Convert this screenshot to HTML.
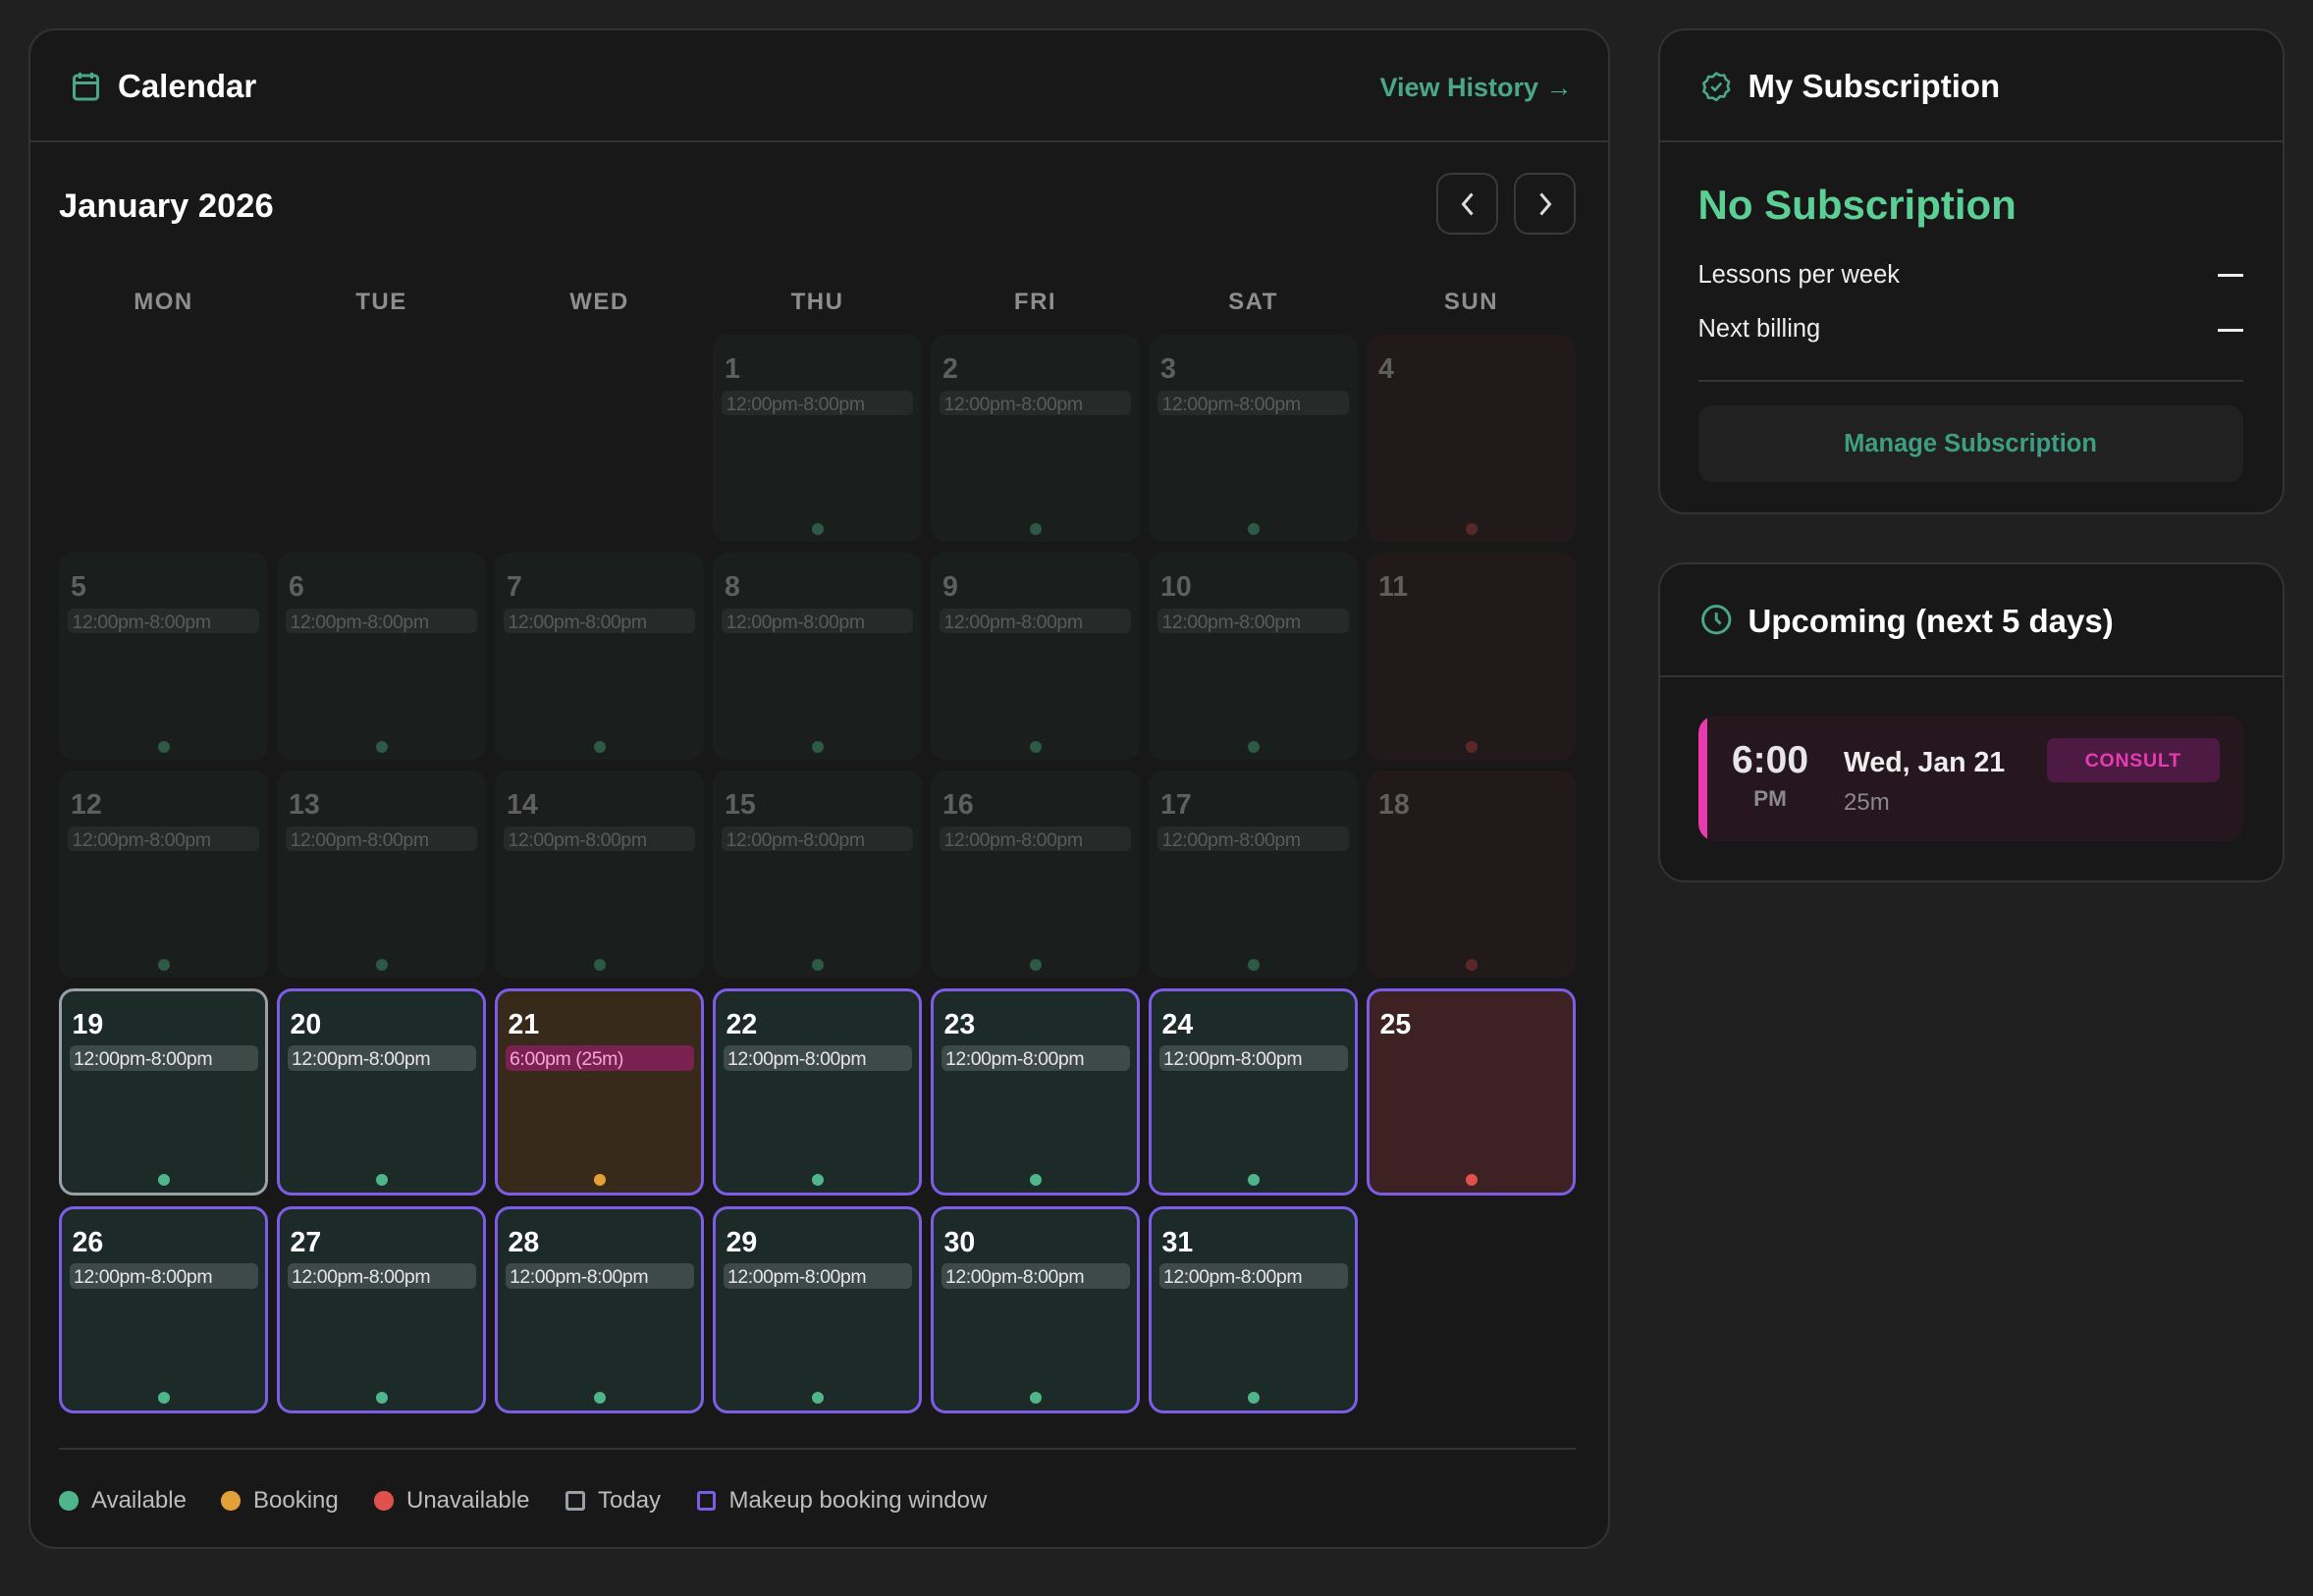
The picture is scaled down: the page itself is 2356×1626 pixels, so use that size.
<!DOCTYPE html>
<html><head><meta charset="utf-8"><style>
*{box-sizing:border-box;margin:0;padding:0}
html,body{width:2356px;height:1626px;overflow:hidden;background:#202020}
#w{zoom:1.5;width:1571px;height:1084px;position:relative;font-family:"Liberation Sans",sans-serif;color:#fff}
.card{position:absolute;background:#181818;border:1.5px solid #333;border-radius:18px}
.hdiv{position:absolute;left:0;right:0;height:1.5px;background:#333}
.t{position:absolute;white-space:nowrap}
.c{position:absolute;width:142px;height:141px;border-radius:10px;background:#1a1f1d}
.c .n{position:absolute;left:8px;top:13px;font-size:19px;font-weight:bold;color:#5f5f5f}
.c .ch{position:absolute;left:6px;right:6px;top:38px;height:17px;border-radius:4px;background:#262b2a;color:#5a5a5a;font-size:13px;line-height:19px;padding-left:3px;letter-spacing:-0.3px}
.c .d{position:absolute;left:67px;top:128px;width:8px;height:8px;border-radius:50%;background:#2d5a46}
.c.su{background:#221a1a}.c.su .d{background:#5a2828}
.c.cur{background:#1c2b27;border:2.5px solid #7d5ce6}
.c.cur .n{color:#fff;left:7px;top:12px}
.c.cur .ch{background:#3e4a48;color:#e6e6e6;left:5px;right:5px;top:37px}
.c.cur .d{background:#4fb58a;left:65px;top:124px}
.c.today{border-color:#9aa0a6}
.c.bk{background:#372a1a}.c.bk .ch{background:#7a2152;color:#f4a6d6}.c.bk .d{background:#e3a037}
.c.un{background:#3e2122}.c.un .d{background:#e0504c}
.wd{position:absolute;top:196px;width:142px;text-align:center;font-size:16px;font-weight:bold;color:#8e8e8e;letter-spacing:1px}
.lg{position:absolute;top:1010px;font-size:16px;color:#bdbdbd;display:flex;align-items:center}
</style></head><body><div id="w">

<div class="card" style="left:19px;top:19px;width:1074px;height:1033px">
 <div class="hdiv" style="top:75px"></div>
</div>
<svg class="t" style="left:47px;top:47px" width="22" height="22" viewBox="0 0 22 22" fill="none" stroke="#4aa889" stroke-width="2"><rect x="3" y="4" width="16" height="16" rx="2"/><path d="M7 2v4M15 2v4M3 9h16M7 9h5"/></svg>
<div class="t" style="left:80px;top:46px;font-size:22px;font-weight:bold">Calendar</div>
<div class="t" style="left:937px;top:49px;font-size:18px;font-weight:bold;color:#4aa889">View History →</div>
<div class="t" style="left:40px;top:127px;font-size:23px;font-weight:bold">January 2026</div>
<div class="t" style="left:975px;top:117px;width:42px;height:42px;border:1.5px solid #3a3a3a;border-radius:10px"><svg width="40" height="40" viewBox="0 0 40 40"><path d="M23 13l-6 7 6 7" stroke="#ddd" stroke-width="2" fill="none"/></svg></div>
<div class="t" style="left:1028px;top:117px;width:42px;height:42px;border:1.5px solid #3a3a3a;border-radius:10px"><svg width="40" height="40" viewBox="0 0 40 40"><path d="M17 13l6 7-6 7" stroke="#ddd" stroke-width="2" fill="none"/></svg></div>

<div class="wd" style="left:40px">MON</div><div class="wd" style="left:188px">TUE</div><div class="wd" style="left:336px">WED</div><div class="wd" style="left:484px">THU</div><div class="wd" style="left:632px">FRI</div><div class="wd" style="left:780px">SAT</div><div class="wd" style="left:928px">SUN</div>

<div class="c" style="left:484px;top:227px"><div class="n">1</div><div class="ch">12:00pm-8:00pm</div><div class="d"></div></div>
<div class="c" style="left:632px;top:227px"><div class="n">2</div><div class="ch">12:00pm-8:00pm</div><div class="d"></div></div>
<div class="c" style="left:780px;top:227px"><div class="n">3</div><div class="ch">12:00pm-8:00pm</div><div class="d"></div></div>
<div class="c su" style="left:928px;top:227px"><div class="n">4</div><div class="d"></div></div>

<div class="c" style="left:40px;top:375px"><div class="n">5</div><div class="ch">12:00pm-8:00pm</div><div class="d"></div></div>
<div class="c" style="left:188px;top:375px"><div class="n">6</div><div class="ch">12:00pm-8:00pm</div><div class="d"></div></div>
<div class="c" style="left:336px;top:375px"><div class="n">7</div><div class="ch">12:00pm-8:00pm</div><div class="d"></div></div>
<div class="c" style="left:484px;top:375px"><div class="n">8</div><div class="ch">12:00pm-8:00pm</div><div class="d"></div></div>
<div class="c" style="left:632px;top:375px"><div class="n">9</div><div class="ch">12:00pm-8:00pm</div><div class="d"></div></div>
<div class="c" style="left:780px;top:375px"><div class="n">10</div><div class="ch">12:00pm-8:00pm</div><div class="d"></div></div>
<div class="c su" style="left:928px;top:375px"><div class="n">11</div><div class="d"></div></div>

<div class="c" style="left:40px;top:523px"><div class="n">12</div><div class="ch">12:00pm-8:00pm</div><div class="d"></div></div>
<div class="c" style="left:188px;top:523px"><div class="n">13</div><div class="ch">12:00pm-8:00pm</div><div class="d"></div></div>
<div class="c" style="left:336px;top:523px"><div class="n">14</div><div class="ch">12:00pm-8:00pm</div><div class="d"></div></div>
<div class="c" style="left:484px;top:523px"><div class="n">15</div><div class="ch">12:00pm-8:00pm</div><div class="d"></div></div>
<div class="c" style="left:632px;top:523px"><div class="n">16</div><div class="ch">12:00pm-8:00pm</div><div class="d"></div></div>
<div class="c" style="left:780px;top:523px"><div class="n">17</div><div class="ch">12:00pm-8:00pm</div><div class="d"></div></div>
<div class="c su" style="left:928px;top:523px"><div class="n">18</div><div class="d"></div></div>

<div class="c cur today" style="left:40px;top:671px"><div class="n">19</div><div class="ch">12:00pm-8:00pm</div><div class="d"></div></div>
<div class="c cur" style="left:188px;top:671px"><div class="n">20</div><div class="ch">12:00pm-8:00pm</div><div class="d"></div></div>
<div class="c cur bk" style="left:336px;top:671px"><div class="n">21</div><div class="ch">6:00pm (25m)</div><div class="d"></div></div>
<div class="c cur" style="left:484px;top:671px"><div class="n">22</div><div class="ch">12:00pm-8:00pm</div><div class="d"></div></div>
<div class="c cur" style="left:632px;top:671px"><div class="n">23</div><div class="ch">12:00pm-8:00pm</div><div class="d"></div></div>
<div class="c cur" style="left:780px;top:671px"><div class="n">24</div><div class="ch">12:00pm-8:00pm</div><div class="d"></div></div>
<div class="c cur un" style="left:928px;top:671px"><div class="n">25</div><div class="d"></div></div>

<div class="c cur" style="left:40px;top:819px"><div class="n">26</div><div class="ch">12:00pm-8:00pm</div><div class="d"></div></div>
<div class="c cur" style="left:188px;top:819px"><div class="n">27</div><div class="ch">12:00pm-8:00pm</div><div class="d"></div></div>
<div class="c cur" style="left:336px;top:819px"><div class="n">28</div><div class="ch">12:00pm-8:00pm</div><div class="d"></div></div>
<div class="c cur" style="left:484px;top:819px"><div class="n">29</div><div class="ch">12:00pm-8:00pm</div><div class="d"></div></div>
<div class="c cur" style="left:632px;top:819px"><div class="n">30</div><div class="ch">12:00pm-8:00pm</div><div class="d"></div></div>
<div class="c cur" style="left:780px;top:819px"><div class="n">31</div><div class="ch">12:00pm-8:00pm</div><div class="d"></div></div>

<div class="t" style="left:40px;top:983px;width:1030px;height:1.5px;background:#333"></div>
<div class="lg" style="left:40px"><span style="width:13px;height:13px;border-radius:50%;background:#4fb58a;margin-right:9px"></span>Available</div>
<div class="lg" style="left:150px"><span style="width:13px;height:13px;border-radius:50%;background:#e3a037;margin-right:9px"></span>Booking</div>
<div class="lg" style="left:254px"><span style="width:13px;height:13px;border-radius:50%;background:#e0504c;margin-right:9px"></span>Unavailable</div>
<div class="lg" style="left:384px"><span style="width:13px;height:13px;border:2.5px solid #9aa0a6;border-radius:2px;margin-right:9px"></span>Today</div>
<div class="lg" style="left:473px"><span style="width:13px;height:13px;border:2.5px solid #7d5ce6;border-radius:2px;margin-right:9px"></span>Makeup booking window</div>

<div class="card" style="left:1126px;top:19px;width:425px;height:330px"><div class="hdiv" style="top:75px"></div></div>
<svg class="t" style="left:1154px;top:47px" width="23" height="23" viewBox="0 0 24 24" fill="none" stroke="#4aa889" stroke-width="1.8" stroke-linejoin="round"><path d="M12 2.5l2.6 1.6 3-.2 1 2.8 2.4 1.9-1 2.9 1 2.9-2.4 1.9-1 2.8-3-.2L12 21.5l-2.6-1.6-3 .2-1-2.8L3 15.4l1-2.9-1-2.9 2.4-1.9 1-2.8 3 .2z"/><path d="M8.5 12l2.5 2.5 4.5-5"/></svg>
<div class="t" style="left:1187px;top:46px;font-size:22px;font-weight:bold">My Subscription</div>
<div class="t" style="left:1153px;top:123px;font-size:28px;font-weight:bold;color:#5ccf94">No Subscription</div>
<div class="t" style="left:1153px;top:177px;font-size:17px;color:#eee">Lessons per week</div>
<div class="t" style="left:1506px;top:186px;width:17px;height:2px;background:#eee"></div>
<div class="t" style="left:1153px;top:214px;font-size:17px;color:#eee">Next billing</div>
<div class="t" style="left:1506px;top:223px;width:17px;height:2px;background:#eee"></div>
<div class="t" style="left:1153px;top:258px;width:370px;height:1.5px;background:#333"></div>
<div class="t" style="left:1153px;top:275px;width:370px;height:52px;border-radius:10px;background:#212121;text-align:center;line-height:52px;font-size:17px;font-weight:bold;color:#3e9e80">Manage Subscription</div>

<div class="card" style="left:1126px;top:382px;width:425px;height:217px"><div class="hdiv" style="top:75px"></div></div>
<svg class="t" style="left:1154px;top:409px" width="23" height="23" viewBox="0 0 24 24" fill="none" stroke="#4aa889" stroke-width="2"><circle cx="12" cy="12" r="9.5"/><path d="M12 7v5l3 3"/></svg>
<div class="t" style="left:1187px;top:409px;font-size:22px;font-weight:bold">Upcoming (next 5 days)</div>
<div class="t" style="left:1153px;top:486px;width:370px;height:85px;border-radius:12px;background:#26171f;overflow:hidden"><div style="position:absolute;left:0;top:0;bottom:0;width:6px;background:#e83bb0"></div></div>
<div class="t" style="left:1168px;top:502px;width:68px;text-align:center;font-size:26px;font-weight:bold;color:#e6e6e6">6:00</div>
<div class="t" style="left:1168px;top:534px;width:68px;text-align:center;font-size:15px;font-weight:bold;color:#8a8a8a">PM</div>
<div class="t" style="left:1252px;top:507px;font-size:19px;font-weight:bold;color:#eee">Wed, Jan 21</div>
<div class="t" style="left:1252px;top:536px;font-size:16px;color:#8a8a8a">25m</div>
<div class="t" style="left:1390px;top:501px;width:117px;height:30px;border-radius:5px;background:#4d1a44;text-align:center;line-height:31px;font-size:13px;font-weight:bold;color:#e83bb0;letter-spacing:0.5px">CONSULT</div>

</div></body></html>
